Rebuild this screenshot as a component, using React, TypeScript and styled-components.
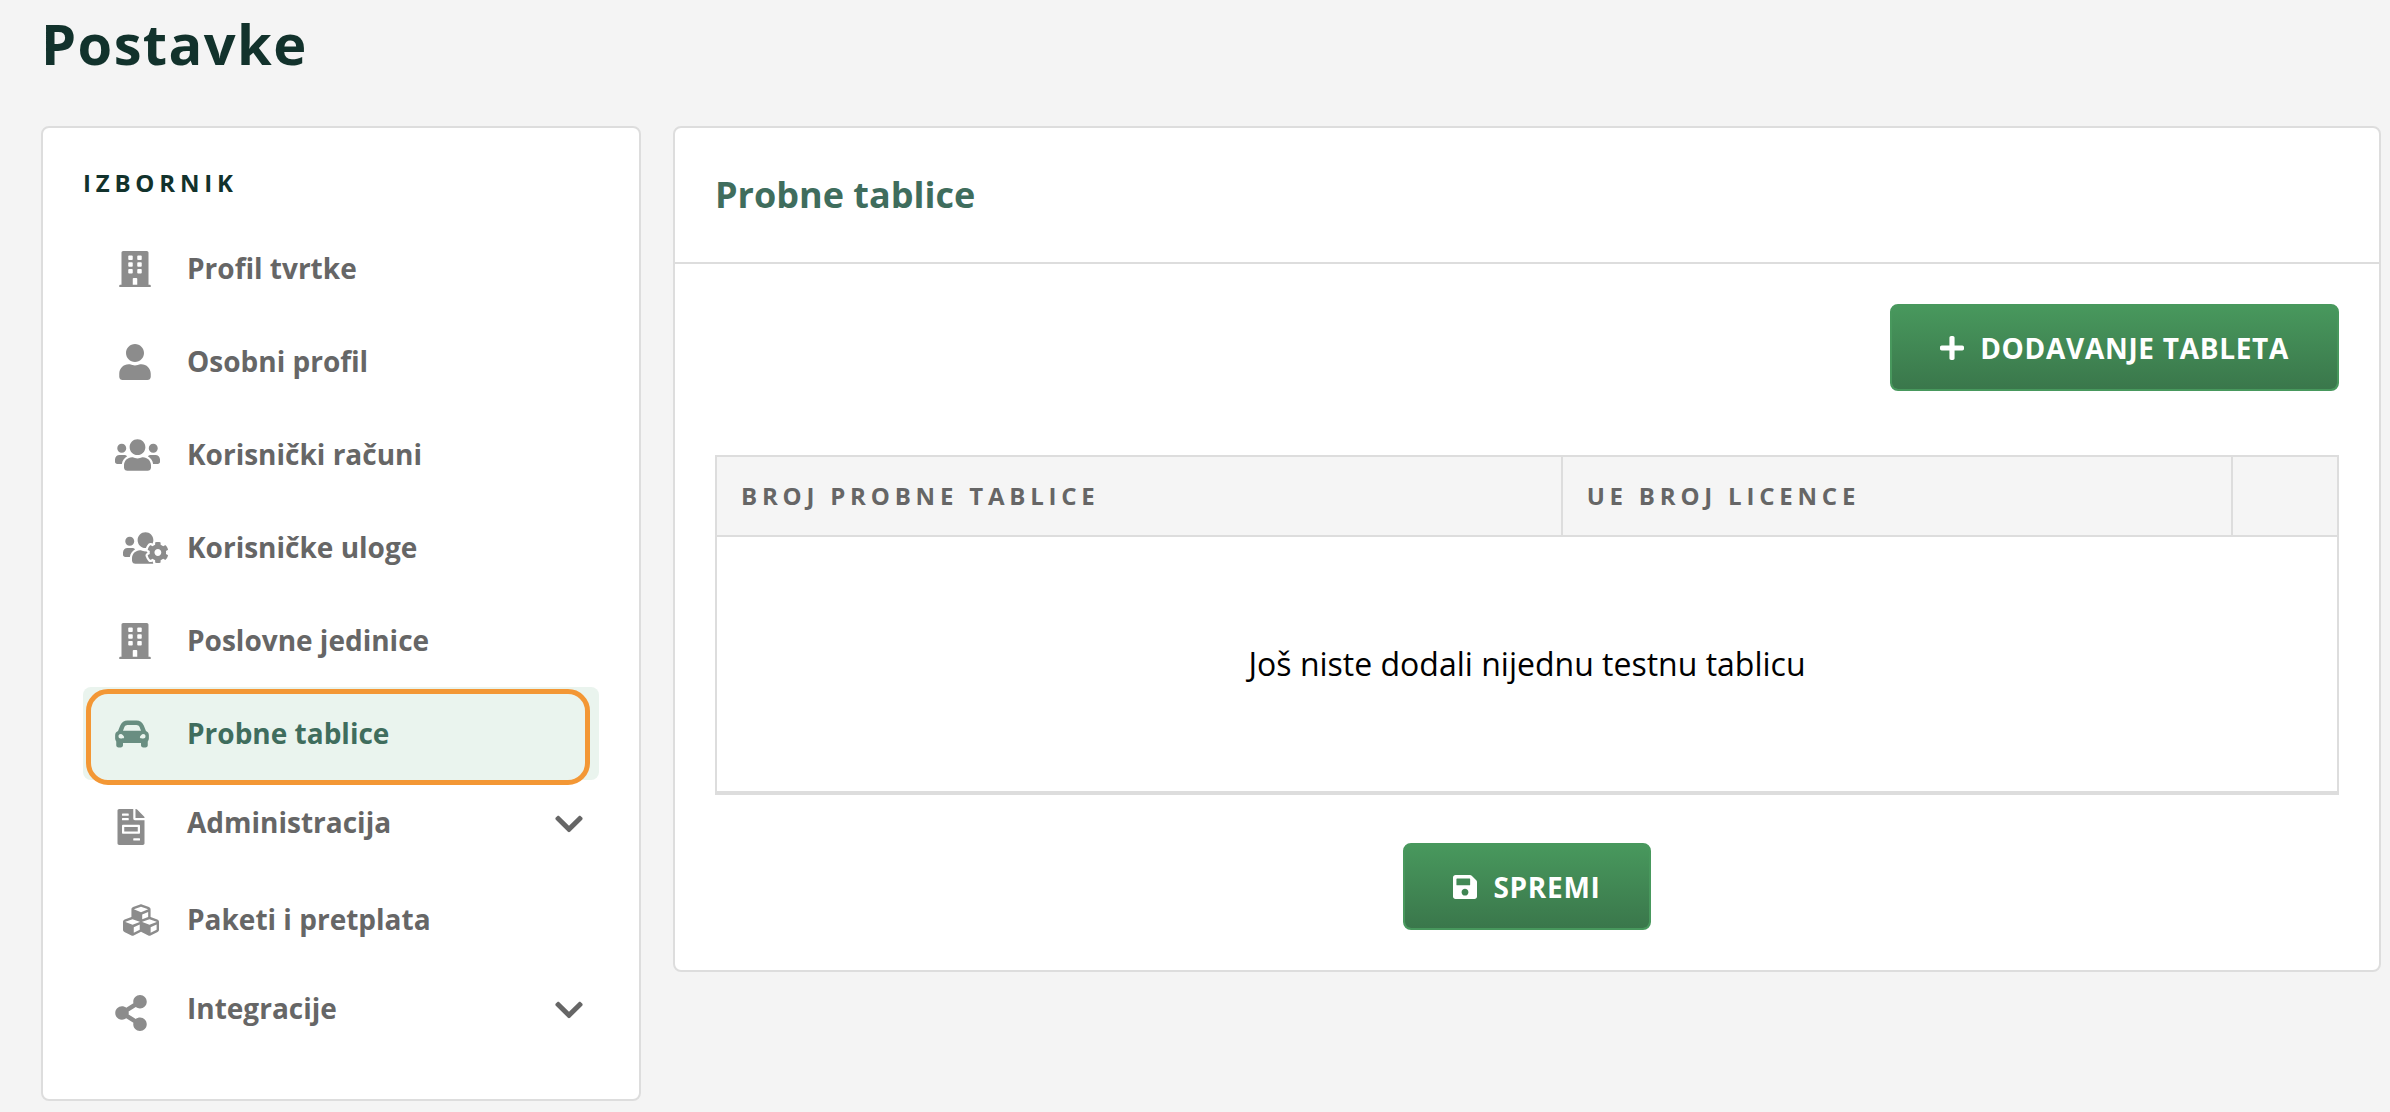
import React from 'react';
import styled, { createGlobalStyle, css } from 'styled-components';
import {
  FaBuilding,
  FaCarAlt,
  FaChevronDown,
  FaCubes,
  FaFileInvoice,
  FaPlus,
  FaSave,
  FaShareAlt,
  FaUser,
  FaUsers,
  FaUsersCog,
} from 'react-icons/fa';
import type { IconType } from 'react-icons';

const color = {
  page: '#f4f4f4',
  card: '#ffffff',
  line: '#dddddd',
  head: '#f5f5f5',
  dark: '#12322c',
  green: '#3f6d5d',
  text: '#666666',
  activeBg: '#eaf4ee',
  button: '#48985d',
  buttonEnd: '#3a774b',
  highlight: '#f39735',
};

const GlobalStyle = createGlobalStyle`
  *, *::before, *::after { box-sizing: border-box; }
  body {
    margin: 0;
    background: ${color.page};
    color: #000;
    font-family: 'Open Sans', 'Noto Sans', sans-serif;
    font-size: 32px;
  }
`;

const Page = styled.div`
  padding: 0 9px 10px 41px;
`;

const PageTitle = styled.h1`
  margin: 0 0 40px;
  color: ${color.dark};
  font-size: 56px;
  font-weight: 700;
  line-height: 86px;
  letter-spacing: 0.025em;
`;

const Layout = styled.div`
  display: grid;
  grid-template-columns: 600px minmax(0, 1fr);
  align-items: start;
  gap: 32px;
`;

const cardStyle = css`
  background: ${color.card};
  border: 2px solid ${color.line};
  border-radius: 8px;
`;

const Sidebar = styled.aside`
  ${cardStyle}
  padding: 40px;
`;

const MenuTitle = styled.h2`
  margin: 0 0 24px;
  color: ${color.dark};
  font-size: 24px;
  font-weight: 700;
  line-height: 30px;
  letter-spacing: 0.2em;
  text-transform: uppercase;
`;

const MenuList = styled.ul`
  margin: 0;
  padding: 0;
  list-style: none;
`;

const MenuItem = styled.li`
  position: relative;
`;

const entryStyle = css<{ $active?: boolean }>`
  display: flex;
  align-items: center;
  width: 100%;
  height: 93px;
  padding: 0 16px 0 32px;
  border: 0;
  border-radius: 8px;
  background: ${(p) => (p.$active ? color.activeBg : 'transparent')};
  color: ${(p) => (p.$active ? color.green : color.text)};
  font: 700 28px/40px 'Open Sans', 'Noto Sans', sans-serif;
  text-align: left;
  text-decoration: none;
  cursor: pointer;
`;

const MenuLink = styled.a<{ $active?: boolean }>`
  ${entryStyle}
`;

const MenuToggle = styled.button`
  ${entryStyle}
`;

const MenuIcon = styled.span<{ $indent: number; $width: number }>`
  display: flex;
  flex: 0 0 72px;
  padding-left: ${(p) => p.$indent}px;
  opacity: 0.75;

  svg {
    flex: none;
    width: ${(p) => p.$width}px;
    height: 36px;
  }
`;

const MenuLabel = styled.span<{ $raised?: boolean }>`
  flex: 1;
  padding-bottom: ${(p) => (p.$raised ? 10 : 2)}px;
`;

const Chevron = styled.span`
  display: flex;
  padding-bottom: 6px;

  svg {
    width: 28px;
    height: 32px;
  }
`;

const Highlight = styled.span`
  position: absolute;
  inset: 2px 9px -5px 3px;
  border: 5px solid ${color.highlight};
  border-radius: 22px;
  pointer-events: none;
`;

const Panel = styled.main`
  ${cardStyle}
`;

const PanelHeader = styled.header`
  padding: 40px;
  border-bottom: 2px solid ${color.line};
`;

const PanelTitle = styled.h2`
  margin: 0;
  color: ${color.green};
  font-size: 36px;
  font-weight: 700;
  line-height: 54px;
`;

const PanelBody = styled.div`
  padding: 40px;
`;

const Actions = styled.div<{ $align: 'center' | 'flex-end' }>`
  display: flex;
  justify-content: ${(p) => p.$align};
`;

const Button = styled.button`
  display: inline-flex;
  align-items: center;
  gap: 16px;
  height: 87px;
  padding: 0 48px;
  border: 2px solid ${color.button};
  border-radius: 8px;
  background: linear-gradient(${color.button}, ${color.buttonEnd}) padding-box, ${color.button};
  color: #fff;
  font: 700 28px/40px 'Open Sans', 'Noto Sans', sans-serif;
  letter-spacing: 0.025em;
  text-transform: uppercase;
  cursor: pointer;

  svg {
    flex: none;
    width: 24px;
    height: 28px;
  }
`;

const Table = styled.table`
  width: 100%;
  margin: 64px 0 48px;
  border: 2px solid ${color.line};
  border-bottom-width: 4px;
  border-spacing: 0;
  table-layout: fixed;
`;

const HeadCell = styled.th<{ $width?: string }>`
  width: ${(p) => p.$width ?? 'auto'};
  height: 80px;
  padding: 0 24px;
  background: ${color.head};
  border-right: 2px solid ${color.line};
  border-bottom: 2px solid ${color.line};
  color: ${color.text};
  font-size: 24px;
  font-weight: 700;
  letter-spacing: 0.2em;
  line-height: 30px;
  text-align: left;
  text-transform: uppercase;

  &:last-child {
    border-right: 0;
  }
`;

const EmptyCell = styled.td`
  height: 254px;
  padding: 0 24px;
  font-size: 32px;
  line-height: 48px;
  text-align: center;
`;

type Entry = {
  label: string;
  icon: IconType;
  width: number;
  indent: number;
  active?: boolean;
  expandable?: boolean;
};

const entries: Entry[] = [
  { label: 'Profil tvrtke', icon: FaBuilding, width: 32, indent: 4 },
  { label: 'Osobni profil', icon: FaUser, width: 32, indent: 4 },
  { label: 'Korisnički računi', icon: FaUsers, width: 45, indent: 0 },
  { label: 'Korisničke uloge', icon: FaUsersCog, width: 45, indent: 8 },
  { label: 'Poslovne jedinice', icon: FaBuilding, width: 32, indent: 4 },
  { label: 'Probne tablice', icon: FaCarAlt, width: 34, indent: 0, active: true },
  { label: 'Administracija', icon: FaFileInvoice, width: 28, indent: 2, expandable: true },
  { label: 'Paketi i pretplata', icon: FaCubes, width: 36, indent: 8 },
  { label: 'Integracije', icon: FaShareAlt, width: 32, indent: 0, expandable: true },
];

function MenuEntry({ label, icon: Icon, width, indent, active, expandable }: Entry) {
  const glyph = (
    <MenuIcon $indent={indent} $width={width} aria-hidden="true">
      <Icon />
    </MenuIcon>
  );

  if (expandable) {
    return (
      <MenuItem>
        <MenuToggle type="button" aria-expanded={false}>
          {glyph}
          <MenuLabel $raised>{label}</MenuLabel>
          <Chevron aria-hidden="true">
            <FaChevronDown />
          </Chevron>
        </MenuToggle>
      </MenuItem>
    );
  }

  return (
    <MenuItem>
      <MenuLink href="#" $active={active} aria-current={active ? 'page' : undefined}>
        {glyph}
        <MenuLabel>{label}</MenuLabel>
      </MenuLink>
      {active && <Highlight />}
    </MenuItem>
  );
}

export default function App() {
  return (
    <Page>
      <GlobalStyle />
      <PageTitle>Postavke</PageTitle>
      <Layout>
        <Sidebar>
          <MenuTitle>Izbornik</MenuTitle>
          <nav>
            <MenuList>
              {entries.map((entry) => (
                <MenuEntry key={entry.label} {...entry} />
              ))}
            </MenuList>
          </nav>
        </Sidebar>
        <Panel>
          <PanelHeader>
            <PanelTitle>Probne tablice</PanelTitle>
          </PanelHeader>
          <PanelBody>
            <Actions $align="flex-end">
              <Button type="button">
                <FaPlus aria-hidden="true" />
                Dodavanje tableta
              </Button>
            </Actions>
            <Table>
              <thead>
                <tr>
                  <HeadCell scope="col" $width="52.2%">Broj probne tablice</HeadCell>
                  <HeadCell scope="col">UE broj licence</HeadCell>
                  <HeadCell scope="col" $width="104px" />
                </tr>
              </thead>
              <tbody>
                <tr>
                  <EmptyCell colSpan={3}>Još niste dodali nijednu testnu tablicu</EmptyCell>
                </tr>
              </tbody>
            </Table>
            <Actions $align="center">
              <Button type="submit">
                <FaSave aria-hidden="true" />
                Spremi
              </Button>
            </Actions>
          </PanelBody>
        </Panel>
      </Layout>
    </Page>
  );
}
